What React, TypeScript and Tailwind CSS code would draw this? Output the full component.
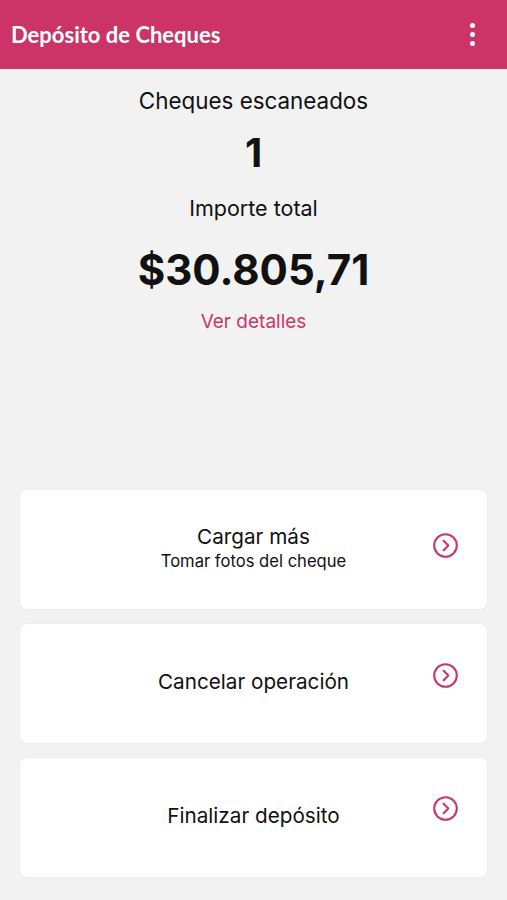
import React from "react";

function ChevronCircle() {
  return (
    <svg width="27" height="27" viewBox="0 0 27 27" fill="none">
      <circle cx="13.5" cy="13.5" r="11.3" stroke="#cc3668" strokeWidth="2.1" />
      <path d="M11.6 8.7 L16.3 13.5 L11.6 18.3" stroke="#cc3668" strokeWidth="2.1" strokeLinecap="round" strokeLinejoin="round" />
    </svg>
  );
}

function Card({ title, subtitle, iconTop }: { title: string; subtitle?: string; iconTop: string }) {
  return (
    <div className="relative flex h-[119px] items-center justify-center rounded-[7px] bg-white pb-[4px] shadow-[0_0_2px_rgba(0,0,0,0.08)]">
      <div className="flex flex-col items-center">
        <div className="text-[20.7px] leading-[26px] text-[#111]">{title}</div>
        {subtitle && <div className="text-[16.6px] leading-[22px] text-[#111]">{subtitle}</div>}
      </div>
      <div className={`absolute right-[28px] ${iconTop}`}>
        <ChevronCircle />
      </div>
    </div>
  );
}

export default function App() {
  return (
    <div className="flex min-h-[900px] w-full flex-col bg-[#f2f2f2]" style={{ fontFamily: "Inter, 'Noto Sans', sans-serif" }}>
      <header className="flex h-[69px] items-center justify-between bg-[#cc3366] pl-[11px] pr-[32px]">
        <h1 className="text-[22px] font-bold text-white" style={{ fontFamily: "Lato, sans-serif" }}>Depósito de Cheques</h1>
        <div className="flex flex-col gap-[4px]">
          <span className="block h-[5px] w-[5px] rounded-full bg-white" />
          <span className="block h-[5px] w-[5px] rounded-full bg-white" />
          <span className="block h-[5px] w-[5px] rounded-full bg-white" />
        </div>
      </header>
      <div className="flex flex-col items-center pt-[17px]">
        <div className="text-[22.4px] leading-[30px] text-[#111]">Cheques escaneados</div>
        <div className="mt-[15px] text-[40px] font-bold leading-[44px] text-[#111]">1</div>
        <div className="mt-[18px] text-[21.5px] leading-[30px] text-[#111]">Importe total</div>
        <div className="mt-[22px] text-[42px] font-bold leading-[50px] text-[#111]">$30.805,71</div>
        <div className="mt-[15px] text-[19px] leading-[24px] text-[#cc3668]">Ver detalles</div>
      </div>
      <div className="mt-[156px] flex flex-col gap-[15px] px-[20px]">
        <Card title="Cargar más" subtitle="Tomar fotos del cheque" iconTop="top-[42px]" />
        <Card title="Cancelar operación" iconTop="top-[38px]" />
        <Card title="Finalizar depósito" iconTop="top-[37px]" />
      </div>
    </div>
  );
}
